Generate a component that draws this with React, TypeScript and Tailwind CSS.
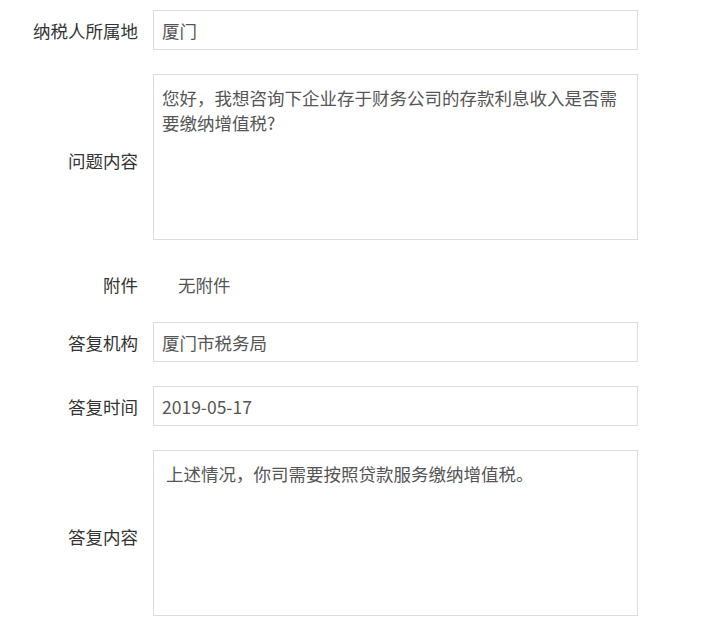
import React from "react";

const font = { fontFamily: '"Noto Sans CJK SC", "Noto Sans", sans-serif' };

function Label({ children, className = "" }: { children: React.ReactNode; className?: string }) {
  return (
    <div className={`w-[138px] shrink-0 text-right text-[17.5px] leading-[25px] text-[#333] ${className}`}>
      {children}
    </div>
  );
}

export default function App() {
  const inputCls =
    "w-[485px] h-[40px] border border-[#ddd] bg-white px-[8px] text-[17.5px] text-[#555] outline-none";
  const areaCls =
    "w-[485px] h-[166px] border border-[#ddd] bg-white px-[8px] py-[10px] text-[17.5px] leading-[25px] text-[#555] outline-none resize-none";

  return (
    <div className="min-h-screen bg-white pt-[10px]" style={font}>
      {/* 纳税人所属地 */}
      <div className="flex items-center gap-[15px] mb-[24px]">
        <Label>纳税人所属地</Label>
        <input readOnly value="厦门" className={inputCls} style={font} />
      </div>

      {/* 问题内容 */}
      <div className="flex items-center gap-[15px]">
        <Label className="pt-[6px]">问题内容</Label>
        <textarea
          readOnly
          value="您好，我想咨询下企业存于财务公司的存款利息收入是否需要缴纳增值税?"
          className={areaCls}
          style={font}
        />
      </div>

      {/* 附件 */}
      <div className="flex items-center gap-[15px] mt-[24px] mb-[18px] h-[40px]">
        <Label>附件</Label>
        <div className="pl-[25px] text-[17.5px] leading-[25px] text-[#555]">无附件</div>
      </div>

      {/* 答复机构 */}
      <div className="flex items-center gap-[15px] mb-[24px]">
        <Label>答复机构</Label>
        <input readOnly value="厦门市税务局" className={inputCls} style={font} />
      </div>

      {/* 答复时间 */}
      <div className="flex items-center gap-[15px] mb-[24px]">
        <Label>答复时间</Label>
        <input readOnly value="2019-05-17" className={inputCls} style={font} />
      </div>

      {/* 答复内容 */}
      <div className="flex items-center gap-[15px]">
        <Label className="pt-[6px]">答复内容</Label>
        <textarea
          readOnly
          value=" 上述情况，你司需要按照贷款服务缴纳增值税。"
          className={areaCls}
          style={font}
        />
      </div>
    </div>
  );
}
